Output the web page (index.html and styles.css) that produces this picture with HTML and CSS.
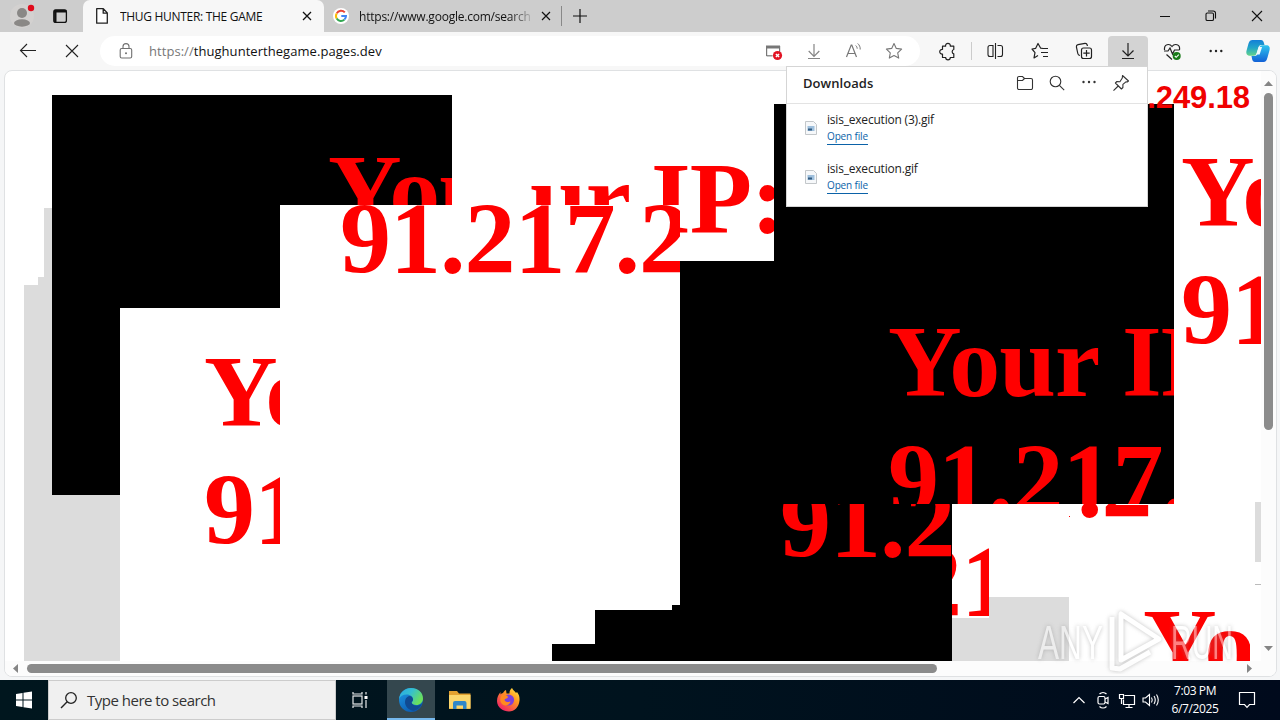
FILE: index.html
```html
<!DOCTYPE html>
<html lang="en">
<head>
<meta charset="utf-8">
<title>THUG HUNTER: THE GAME</title>
<link rel="stylesheet" href="styles.css">
</head>
<body>
<div class="desktop">
  <header class="tabs">
    <svg class="profile" width="48" height="32" viewBox="0 0 48 32"><circle cx="22" cy="16" r="12" fill="#d3d1d0"/><circle cx="22" cy="13" r="5" fill="#8a8886"/><ellipse cx="22" cy="23" rx="8" ry="3.7" fill="#8a8886"/><circle cx="31" cy="8" r="3.2" fill="#e00b1c"/></svg>
    <svg class="workspace" width="35" height="32" viewBox="48 0 35 32"><rect x="53.8" y="10" width="12.6" height="12.4" rx="2" fill="none" stroke="#111" stroke-width="1.3"/><path d="M54 11.2h12.4" stroke="#111" stroke-width="2.600"/><path d="M55.300 12v10" stroke="#111" stroke-width="2.400"/></svg>
    <div class="tab active">
      <svg width="14" height="18" viewBox="0 0 14 18"><path d="M1.7 1.7h6.6l4 4.2v10.3H1.7zM8.2 2v4.2h4" fill="#fff" stroke="#222" stroke-width="1.3" stroke-linejoin="round"/></svg>
      <span class="tab-title first">THUG HUNTER: THE GAME</span>
      <svg class="x" width="10" height="10" viewBox="0 0 10 10"><path d="M1 1l8 8M9 1L1 9" stroke="#111" stroke-width="1.3"/></svg>
    </div>
    <div class="tab">
      <svg width="16" height="16" viewBox="0 0 16 16"><circle cx="8" cy="8" r="8" fill="#fff"/><g fill="none" stroke-width="2"><path d="M11.8 4.4A5 5 0 0 0 3.7 5.4" stroke="#ea4335"/><path d="M3.7 5.4a5 5 0 0 0 0 5.2" stroke="#fbbc05"/><path d="M3.7 10.6a5 5 0 0 0 7.7 1" stroke="#34a853"/><path d="M11.4 11.6A5 5 0 0 0 13 8H8.3" stroke="#4285f4"/></g></svg>
      <span class="tab-title second">https://www.google.com/search</span>
      <svg class="x" width="10" height="10" viewBox="0 0 10 10"><path d="M1 1l8 8M9 1L1 9" stroke="#111" stroke-width="1.2"/></svg>
    </div>
    <i class="tab-sep"></i>
    <svg class="plus" width="14" height="14" viewBox="0 0 14 14"><path d="M7 0v14M0 7h14" stroke="#111" stroke-width="1.2"/></svg>
    <div class="window-buttons">
      <svg width="46" height="32" viewBox="0 0 46 32"><path d="M18 16.5h10" stroke="#111"/></svg>
      <svg width="46" height="32" viewBox="0 0 46 32"><g fill="none" stroke="#111" stroke-width="1.1"><rect x="18" y="13" width="7.5" height="7.5" rx="1.3"/><path d="M20 11h5.200a2.300 2.300 0 0 1 2.300 2.300v5.200"/></g></svg>
      <svg width="46" height="32" viewBox="0 0 46 32"><path d="M18 11l10 10M28 11L18 21" stroke="#111" stroke-width="1.1"/></svg>
    </div>
  </header>

  <nav class="toolbar">
    <svg class="cell back" viewBox="0 0 40 30"><path d="M28 14.500H12.500M19 8l-6.500 6.500L19 21" fill="none" stroke="#222" stroke-width="1.1"/></svg>
    <svg class="cell stop" viewBox="0 0 40 30"><path d="M14 9l12 12M26 9L14 21" stroke="#222" stroke-width="1.1"/></svg>
    <div class="address">
      <svg class="lock" width="14" height="16" viewBox="0 0 14 16"><rect x="1.200" y="5.500" width="11.500" height="9.500" rx="1.500" fill="none" stroke="#707070" stroke-width="1.100"/><path d="M4 5.500V3.600a3 3 0 0 1 6 0v1.900" fill="none" stroke="#707070" stroke-width="1.100"/><circle cx="7" cy="10.200" r="1" fill="#707070"/></svg>
      <span class="url"><span class="scheme">https://</span>thughunterthegame.pages.dev</span>
      <svg class="cell" viewBox="0 0 40 30"><path d="M12.600 20V10.500h13v6" fill="none" stroke="#777" stroke-width="1.200"/><path d="M12 9.500h14v3H12z" fill="#777"/><path d="M12.600 19.800h6" stroke="#777" stroke-width="1.200"/><circle cx="23.500" cy="19.500" r="4.600" fill="#e21323"/><path d="M21.900 17.900l3.200 3.200M25.100 17.900l-3.200 3.200" stroke="#fff" stroke-width="1.400"/></svg>
      <svg class="cell" viewBox="0 0 40 30"><path d="M20 8v12M14.700 15l5.300 5.300 5.300-5.300M14 22.500h12" fill="none" stroke="#858585" stroke-width="1.200"/></svg>
      <svg class="cell" viewBox="0 0 40 30"><path d="M12.500 21l4.700-12h.6l4.700 12M14 17.500h7" fill="none" stroke="#777" stroke-width="1.200"/><path d="M21.700 9.500c1 .9 1.500 2 1.500 3.200M23.700 7.500c1.700 1.500 2.700 3.600 2.500 6" fill="none" stroke="#777"/></svg>
      <svg class="cell" viewBox="0 0 40 30"><path d="M20 7.500l2.300 4.900 5.300.7-3.900 3.700 1 5.300-4.700-2.600-4.700 2.600 1-5.300-3.900-3.700 5.300-.7z" fill="none" stroke="#777" stroke-width="1.100" stroke-linejoin="round"/></svg>
    </div>
    <svg class="cell" viewBox="0 0 40 30"><path d="M14.500 10.200h3.100a2.400 2.400 0 1 1 4.700 0h3.500v3.300a2.300 2.300 0 0 0 0 4.400v3.600h-3.500a2.300 2.300 0 0 1-4.600 0h-3.200V18a2.300 2.300 0 1 1 0-4.500z" fill="none" stroke="#222" stroke-width="1.200" stroke-linejoin="round"/></svg>
    <i class="tool-sep"></i>
    <svg class="cell" viewBox="0 0 40 30"><path d="M18 9.500h-3a2 2 0 0 0-2 2v7a2 2 0 0 0 2 2h3zM22.500 9.500h3a2 2 0 0 1 2 2v7a2 2 0 0 1-2 2h-3M20.500 7v16" fill="none" stroke="#222" stroke-width="1.100"/></svg>
    <svg class="cell gap5" viewBox="0 0 40 30"><path d="M23 12.500l-2.300-.3L18 7.500l-2.300 4.800-3.700.7 3 3.600-1 5.300 4-2.300M21 12.500h7M21 16.500h7M23 20.500h5" fill="none" stroke="#222" stroke-width="1.200" stroke-linejoin="round"/></svg>
    <svg class="cell gap4" viewBox="0 0 40 30"><path d="M16 19.500c-1.500-.3-2-1-2.200-2L12.400 11c-.2-1.500.4-2.100 1.600-2.400l7-1.300c1.200-.1 1.900.4 2.200 1.700l.2 1" fill="none" stroke="#222" stroke-width="1.200"/><rect x="17.500" y="12" width="10" height="10.500" rx="2" fill="#f7f7f7" stroke="#222" stroke-width="1.200"/><path d="M22.500 14v6.500M19.300 17.200h6.400" stroke="#222" stroke-width="1.200"/></svg>
    <svg class="cell gap4 pressed" viewBox="0 0 40 30"><path d="M20 7v12.500M14.500 14.500l5.500 5.500 5.500-5.500M14 22.500h12" fill="none" stroke="#222" stroke-width="1.200"/></svg>
    <svg class="cell gap4" viewBox="0 0 40 30"><path d="M12.500 14c-.7-6 5-6.800 7.500-3.500 2.500-3.300 8.500-2.500 7.500 3.500M14.500 18.500l5.500 5M12 15h4l2-3 2.500 6 2-4h5" fill="none" stroke="#222" stroke-width="1.200"/><circle cx="24.700" cy="20" r="4" fill="#187a18"/><path d="M22.800 20l1.400 1.300 2.600-2.600" fill="none" stroke="#fff" stroke-width="1.100"/></svg>
    <svg class="cell gap4" viewBox="0 0 40 30"><g fill="#222"><circle cx="14.700" cy="15" r="1.200"/><circle cx="20" cy="15" r="1.200"/><circle cx="25.300" cy="15" r="1.200"/></g></svg>
    <svg class="cell gap2" viewBox="0 0 40 30"><defs><linearGradient id="co1" x1="0" y1="0" x2="0" y2="1"><stop offset="0" stop-color="#137fd8"/><stop offset=".5" stop-color="#22a6c8"/><stop offset="1" stop-color="#63d38a"/></linearGradient><linearGradient id="co2" x1="0" y1="0" x2="0" y2="1"><stop offset="0" stop-color="#2ec4ee"/><stop offset="1" stop-color="#1261d6"/></linearGradient></defs><path d="M14.500 4h8.500c1.700 0 2.300 1 2.800 2.500l.7 2.500h-3c-2 0-2.700 1.200-3.300 3l-1.500 5c-.6 1.800-1.200 2.700-3.200 2.700h-3.200c-3 0-4.600-2-3.800-5l2-7.200C11.300 5 12.400 4 14.500 4z" fill="url(#co1)"/><path d="M25.500 26H17c-1.700 0-2.300-1-2.800-2.500L13.500 20h3c2 0 2.700-1.200 3.300-3l1.500-5c.6-1.800 1.200-2.700 3.200-2.700h3.700c3 0 4.100 2 3.300 5l-2 7.200c-.8 3-1.900 4.500-4 4.500z" fill="url(#co2)"/><path d="M18.300 18.500l2.500-7.500h3.300l-2.500 7.500z" fill="#eefaff"/></svg>
  </nav>

  <main class="viewport">
    <svg class="page" viewBox="5 71 1256 590">
      <path d="M24 285h14v-8h6v-69h8v80h100v373H24z" fill="#dcdcdc"/>
      <path d="M952 597h117v64H952zM1255 502h6v60h-6z" fill="#dcdcdc"/>
      <path d="M1255 584.500h6" stroke="#bbb"/>
      <path d="M52 95h400v400H52z"/>
      <path d="M120 308h432v353H120z" fill="#fff"/>
      <path d="M452 95h322v166H452z" fill="#fff"/>
      <path d="M774 104h400v400H774zM680 261h272v400H552v-17h43v-34h77v-5h8z"/>
      <path d="M280 205h400v400H280z" fill="#fff"/>
      <path d="M952 504h37v114h-37z" fill="#fff"/>
      <path d="M1069 516h1v1h-1z" fill="#f00"/>
      <g class="shout">
        <svg x="280" y="95" width="172" height="110" viewBox="280 95 172 110"><text x="328" y="225">You</text></svg>
        <svg x="529" y="95" width="245" height="110" viewBox="529 95 245 110"><text x="530" y="233">ur</text><text x="651" y="233">IP:</text></svg>
        <svg x="680" y="205" width="94" height="56" viewBox="680 205 94 56"><text x="651" y="233">IP:</text></svg>
        <svg x="280" y="205" width="400" height="400" viewBox="280 205 400 400"><text x="340" y="273">91.217.2</text></svg>
        <svg x="120" y="308" width="160" height="353" viewBox="120 308 160 353"><text x="204" y="426">Yo</text><text x="204" y="544">91</text></svg>
        <svg x="774" y="104" width="400" height="400" viewBox="774 104 400 400"><text x="888" y="396">Your IP</text><text x="888" y="514">91.217.</text></svg>
        <svg x="680" y="504" width="272" height="157" viewBox="680 504 272 157"><text x="780" y="557">91.2</text></svg>
        <svg x="1070" y="504" width="104" height="100" viewBox="1070 504 104 100"><text x="1077" y="517">.2</text></svg>
        <svg x="952" y="504" width="37" height="114" viewBox="952 504 37 114"><text x="911" y="616">21</text></svg>
        <svg x="1174" y="71" width="87" height="433" viewBox="1174 71 87 433"><text x="1181" y="226">Yo</text><text x="1181" y="344">91</text></svg>
        <svg x="1100" y="590" width="150" height="71" viewBox="1100 590 150 71"><text x="1143" y="679">Yo</text></svg>
      </g>
      <text class="counter" x="1250" y="108" text-anchor="end">.249.18</text>
    </svg>
    <svg class="vscroll" viewBox="1261 71 15 590"><path d="M1264 86l4.500-5 4.500 5z" fill="#858585"/><rect x="1264" y="93" width="9" height="337" rx="4.500" fill="#8b8b8b"/><path d="M1264 646l4.500 5 4.500-5z" fill="#858585"/></svg>
    <svg class="hscroll" viewBox="5 661 1271 15"><path d="M18 664l-5 4.500 5 4.500z" fill="#858585"/><rect x="27" y="664" width="910" height="9" rx="4.500" fill="#8b8b8b"/><path d="M1247 664l5 4.500-5 4.500z" fill="#858585"/></svg>
  </main>

  <footer class="taskbar">
    <svg class="start" viewBox="0 680 48 40"><path d="M16 694l6.500-1v6.500H16zM23.500 692.800l8.500-1.200v7.900h-8.500zM16 700.500h6.500v6.500l-6.500-1zM23.500 700.500H32v7.900l-8.500-1.200z" fill="#fff"/></svg>
    <div class="search">
      <svg width="18" height="18" viewBox="0 0 18 18"><circle cx="11" cy="7" r="5.300" fill="none" stroke="#222" stroke-width="1.300"/><path d="M7.200 10.800L1 17" stroke="#222" stroke-width="1.400"/></svg>
      <span>Type here to search</span>
    </div>
    <svg class="task" viewBox="0 0 48 40"><g fill="none" stroke="#e6eaec" stroke-width="1.200"><rect x="17" y="16" width="9" height="8"/><path d="M17 12v2h9v-2M17 28v-2h9v2M30 12v2.500M30 20v8"/></g><path d="M28.500 16h3v3h-3z" fill="#fff"/></svg>
    <svg class="task edge" viewBox="0 0 48 40"><defs><linearGradient id="eg" x1="0" y1="0" x2="1" y2=".5"><stop offset="0" stop-color="#29a9e6"/><stop offset=".5" stop-color="#35bfd0"/><stop offset="1" stop-color="#6be05a"/></linearGradient><linearGradient id="eb" x1="0" y1="0" x2=".7" y2="1"><stop offset="0" stop-color="#1f9be6"/><stop offset="1" stop-color="#0a57ad"/></linearGradient></defs><circle cx="24" cy="20" r="12" fill="url(#eb)"/><path d="M12 19C13 12 18 8 24 8c7 0 12 4.600 12 10.500 0 4-3 6.500-6.600 6.500-3 0-4.700-1.200-4.700-2.300 0-.8 1.400-1.300 1.400-3.300 0-2.500-2.600-5-6.300-5-4 0-6.800 2-7.800 4.600z" fill="url(#eg)"/><path d="M24.500 22.500c.5 2 3 3.800 6.300 3.300l4-1.500c-1.700 3.500-5 6-8.300 6.500-4.500-.6-8.500-4-8.500-8.800 0-3 1.500-4.800 4-6 3 0 4 2 4 3.800 0 1.200-1.500 1.700-1.500 2.700z" fill="#104a91"/><path d="M0 38h48v2H0z" fill="#76b9ed"/></svg>
    <svg class="task" viewBox="1 0 48 40"><path d="M14 11h8l2 2.500h11.500V29H14z" fill="#e3a12f"/><path d="M14 15h21.500v13.500H14z" fill="#fbd66c"/><path d="M18 29v-6q0-2 2-2h9.500q2 0 2 2v6h-3.500v-3.500h-6.500V29z" fill="#2f87c9"/></svg>
    <svg class="task" viewBox="0 0 48 40"><defs><linearGradient id="ff" x1="1" y1="0" x2=".2" y2="1"><stop offset="0" stop-color="#fff44f"/><stop offset=".4" stop-color="#ff9a20"/><stop offset="1" stop-color="#f0196b"/></linearGradient></defs><path d="M28 8c1 2 3 3.500 4 5l1-1c2 2.500 2.800 5 2.500 8.500C35 27 30.500 31.500 25 31.500S13 27.500 13 21c0-4 1.500-6.500 3.500-9v2.500c1-1 1.500-1.200 2.500-1.400 1-1.800 1.400-2.300 3-3.100l.5 3.500h3c-.2-2.500.8-4 2.500-5.500z" fill="url(#ff)"/><circle cx="24.500" cy="20" r="5.600" fill="#7a3fdc"/><path d="M18 15c2.500-.5 4.500 0 6 1.700 0 2-3 1.600-3.500 3.300 1 2.500 4 2.200 6 1.500-.8 3.500-4.500 5-7.500 3.300-3-1.800-3.800-6-1-9.800z" fill="#ff8a1f"/></svg>
    <div class="tray">
      <svg width="24" height="40" viewBox="0 0 24 40"><path d="M6.500 23l5.500-5.500 5.500 5.500" fill="none" stroke="#fff" stroke-width="1.200"/></svg>
      <svg width="24" height="40" viewBox="0 0 24 40"><g fill="none" stroke="#fff" stroke-width="1.200"><rect x="7" y="16.500" width="7" height="7.500" rx="1.500"/><path d="M14 19l3-1.500v6L14 22M8.500 14c2-2 5-2 7 0M8.500 26.500c2 2 5 2 7 0"/></g></svg>
      <svg width="24" height="40" viewBox="0 0 24 40"><g fill="none" stroke="#fff" stroke-width="1.200"><path d="M9.500 15.500h10v9h-11v-5M14 24.500v3M10.500 27.500h7M4.500 14.500h4v4h-4zM6.500 18.500V24"/></g></svg>
      <svg width="24" height="40" viewBox="0 0 24 40"><path d="M4 18h2.500l4-3.500v11l-4-3.500H4zM12.500 17.500q1.500 2.500 0 5M15 16q2.500 4 0 8M17.500 14.500q3.500 5.500 0 11" fill="none" stroke="#fff" stroke-width="1.100"/></svg>
    </div>
    <div class="clock"><span class="time">7:03 PM</span><span class="date">6/7/2025</span></div>
    <svg class="notice" width="48" height="40" viewBox="0 0 48 40"><path d="M16.500 12.500h15v12h-5L24 27.300l-2.500-2.800h-5z" fill="none" stroke="#fff" stroke-width="1.200"/></svg>
  </footer>

  <section class="downloads">
    <div class="downloads-head">
      <h2>Downloads</h2>
      <svg width="18" height="18" viewBox="0 0 18 18"><path d="M1.500 4a1.500 1.500 0 0 1 1.500-1.500h3.500l2 2H15A1.500 1.500 0 0 1 16.500 6v8a1.500 1.500 0 0 1-1.500 1.500H3A1.500 1.500 0 0 1 1.500 14zM1.500 6.500h5l2-2" fill="none" stroke="#333" stroke-width="1.100"/></svg>
      <svg width="18" height="18" viewBox="0 0 18 18"><circle cx="7.500" cy="7.500" r="5.300" fill="none" stroke="#333" stroke-width="1.100"/><path d="M11.400 11.400l4.800 4.800" stroke="#333" stroke-width="1.100"/></svg>
      <svg width="18" height="18" viewBox="0 0 18 18"><g fill="#333"><circle cx="3.500" cy="8" r="1.200"/><circle cx="9" cy="8" r="1.200"/><circle cx="14.500" cy="8" r="1.200"/></g></svg>
      <svg width="18" height="18" viewBox="0 0 18 18"><path d="M10.500 1.500l6 5.500-1.300 1-1.300-.2-3 2.500v3.200l-1.500 1.500-6-6 1.500-1.500 3 .2L10.300 4zM6.200 12L1.500 16.700" fill="none" stroke="#333" stroke-width="1.100" stroke-linejoin="round"/></svg>
    </div>
    <div class="file">
      <svg width="12" height="14" viewBox="0 0 12 14"><path d="M.5.500h8l3 3v10H.5z" fill="#f6f8fa" stroke="#c3c7ca"/><path d="M2.500 5h7v5h-7z" fill="#9fc0dd"/><path d="M3 7.500h4V9.500H3z" fill="#315b80"/></svg>
      <div><p class="name n1">isis_execution (3).gif</p><a class="open">Open file</a></div>
    </div>
    <div class="file">
      <svg width="12" height="14" viewBox="0 0 12 14"><path d="M.5.500h8l3 3v10H.5z" fill="#f6f8fa" stroke="#c3c7ca"/><path d="M2.500 5h7v5h-7z" fill="#9fc0dd"/><path d="M3 7.500h4V9.500H3z" fill="#315b80"/></svg>
      <div><p class="name n2">isis_execution.gif</p><a class="open">Open file</a></div>
    </div>
  </section>

  <svg class="watermark" viewBox="1030 604 210 70">
    <g class="mark">
      <text x="1038" y="659" textLength="65" lengthAdjust="spacingAndGlyphs">ANY</text>
      <text x="1171" y="659" textLength="62" lengthAdjust="spacingAndGlyphs">RUN</text>
      <g fill="none" stroke="#fff" stroke-width="5" stroke-linejoin="round"><path d="M1121 614v46l38-21z"/><path d="M1112 617v51l8 1 30-17"/></g>
    </g>
  </svg>
</div>
</body>
</html>
```
FILE: styles.css
```css
* { box-sizing: border-box; }
body { margin: 0; overflow: hidden; font-family: "Open Sans", "Noto Sans", sans-serif; color: #111; }
svg { display: block; flex: none; }
p, h2 { margin: 0; }
.desktop { position: relative; width: 1280px; height: 720px; display: flex; flex-direction: column; background: #f5f6f7; overflow: hidden; }

.tabs { height: 32px; flex: none; display: flex; align-items: center; background: #cdcdcd; }
.tab { height: 32px; width: 238px; display: flex; align-items: center; padding-left: 9px; font-size: 12px; white-space: nowrap; }
.tab.active { width: 241px; background: #f7f7f7; border-radius: 7px 7px 0 0; padding-left: 12px; }
.tab-title { width: 178px; overflow: hidden; }
.tab-title.first { margin-left: 11px; letter-spacing: -.3px; }
.tab-title.second { margin-left: 10px; width: 177px; letter-spacing: -.22px; -webkit-mask-image: linear-gradient(90deg, #000 150px, transparent 176px); mask-image: linear-gradient(90deg, #000 150px, transparent 176px); }
.tab .x { margin-left: 5px; }
.tab.active .x { margin-left: 4px; }
.tab-sep { width: 1px; height: 20px; background: #888; margin-left: -1px; }
.plus { margin-left: 11px; }
.window-buttons { display: flex; margin-left: auto; }

.toolbar { height: 38px; flex: none; display: flex; align-items: center; background: #f7f7f7; padding: 0 2px 0 8px; }
.cell { width: 40px; height: 30px; }
.stop { margin-left: 4px; }
.address { display: flex; align-items: center; width: 820px; height: 30px; margin: 0 8px; padding: 0 6px 0 19px; border-radius: 15px; background: #fff; }
.url { flex: 1; margin-left: 16px; font-size: 13px; white-space: nowrap; letter-spacing: .05px; }
.scheme { color: #777; }
.tool-sep { width: 1px; height: 18px; margin: 0 3px; background: #ccc; }
.gap5 { margin-left: 5px; }
.gap4 { margin-left: 4px; }
.gap2 { margin-left: 2px; }
.pressed { background: #d3d3d3; border-radius: 4px 4px 0 0; }

.viewport { width: 1273px; height: 607px; flex: none; margin-left: 4px; display: grid; grid-template: 590px 15px / 1256px 15px; background: #fff; border: 1px solid #dfe1e3; border-radius: 8px; overflow: hidden; }
.page { width: 1256px; height: 590px; }
.vscroll { width: 15px; height: 590px; background: #fcfcfc; }
.hscroll { grid-column: 1 / 3; width: 1271px; height: 15px; background: #fcfcfc; }
.shout { fill: #f00; font: bold 102px "Liberation Serif", serif; letter-spacing: -1px; }
.counter { fill: #f00000; font: bold 31px "Liberation Sans", sans-serif; letter-spacing: -.1px; }

.taskbar { height: 40px; flex: none; margin-top: 3px; display: flex; background: linear-gradient(90deg, #00161e, #00131e 50%, #000a1c); }
.start, .task { width: 48px; height: 40px; }
.search { width: 288px; display: flex; align-items: center; padding-left: 11px; background: #f0f0f0; border: 1px solid #ccc; font-size: 15px; color: #333; white-space: nowrap; }
.search span { margin-left: 9px; letter-spacing: -.5px; }
.edge { margin-left: 3px; margin-right: 1px; background: #34474e; }
.tray { display: flex; margin-left: auto; }
.clock { width: 64px; display: flex; flex-direction: column; align-items: center; padding-top: 2px; color: #fff; font-size: 12px; line-height: 18px; }
.clock span { letter-spacing: -.4px; }
.notice { margin-left: -4px; margin-right: 9px; }

.downloads { position: absolute; left: 786px; top: 66px; width: 362px; height: 141px; background: #fff; border: 1px solid #d5d5d5; }
.downloads-head { height: 37px; display: flex; align-items: center; gap: 14px; padding: 0 17px 5px 16px; border-bottom: 1px solid #e3e3e3; }
.downloads h2 { flex: 1; font-size: 13px; font-weight: 600; letter-spacing: .05px; color: #222; }
.file { display: flex; height: 49px; padding: 17px 0 0 18px; }
.file div { margin: -9px 0 0 10px; }
.name { font-size: 12px; line-height: 16px; color: #222; letter-spacing: -.2px; }
.open { display: inline-block; font-size: 10px; line-height: 14px; height: 16px; margin-top: 1px; letter-spacing: -.15px; color: #0b62a8; border-bottom: 1px solid #0b62a8; vertical-align: top; }

.watermark { position: absolute; left: 1030px; top: 604px; width: 210px; height: 70px; pointer-events: none; }
.mark { opacity: .5; fill: #fff; font: 48px "Liberation Sans", sans-serif; filter: drop-shadow(0 0 2px #888); }
```
